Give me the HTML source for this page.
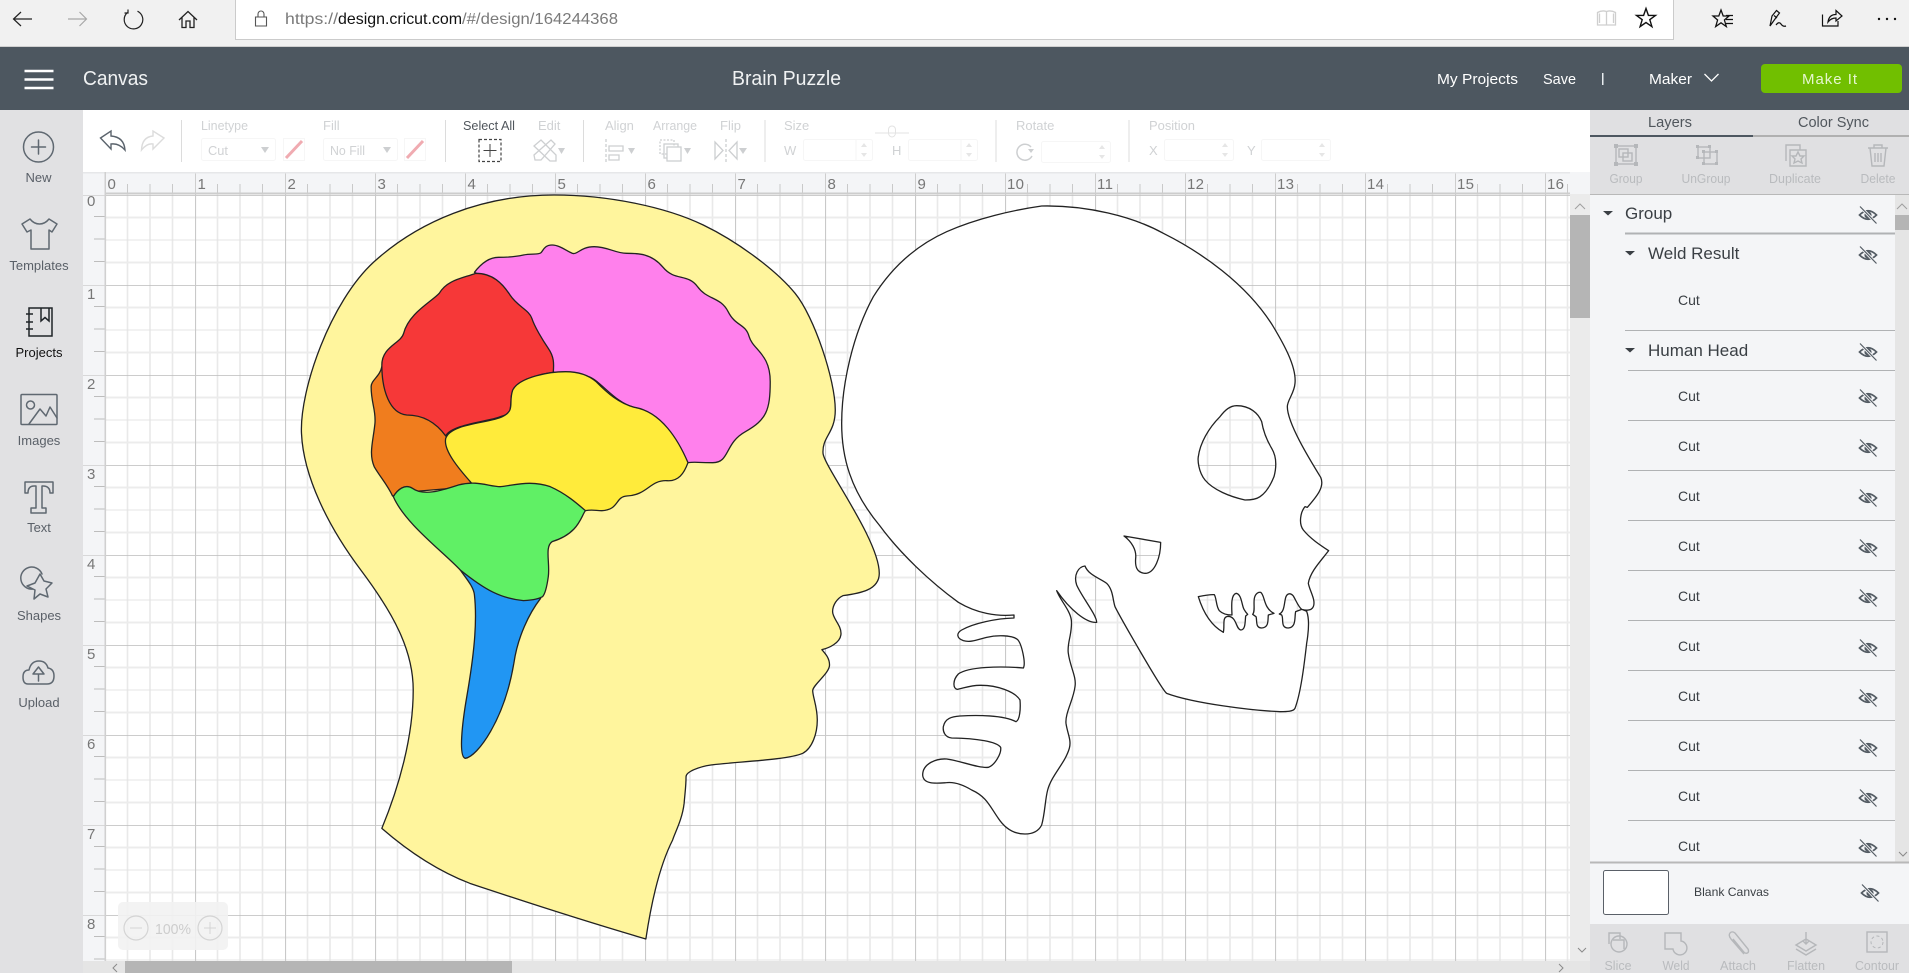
<!DOCTYPE html>
<html><head><meta charset="utf-8"><title>Brain Puzzle</title>
<style>
html,body{margin:0;padding:0;background:#fff;width:1909px;height:973px;overflow:hidden}
svg{display:block;font-family:"Liberation Sans",Arial,sans-serif}
.art path{vector-effect:non-scaling-stroke;stroke:#222;stroke-width:1.3;stroke-linejoin:round}
.side text{font-size:13px;fill:#5a6068;text-anchor:middle}
.side .ic{fill:none;stroke:#5f6871;stroke-width:1.5;stroke-linejoin:round;stroke-linecap:round}
.dis{font-size:13px;fill:#d0d2d4}
.box{fill:#fff;stroke:#f6f6f6;stroke-width:1}
.ti{fill:none;stroke:#cdcfd1;stroke-width:1.3}
.act{font-size:13px;fill:#b9bbbe;text-anchor:middle}
.ai{fill:none;stroke:#b5b7ba;stroke-width:1.4}
.cut{font-size:14px;fill:#3a3f44}
.lay{font-size:17px;fill:#3a3f44}
.rn{font-size:15px;fill:#777}
.dv{stroke:#dcdcdc;stroke-width:1}
.rw{stroke:#b0b2b4;stroke-width:1}
</style></head><body>
<svg width="1909" height="973" viewBox="0 0 1909 973" xmlns="http://www.w3.org/2000/svg">
<defs>
<pattern id="grid" patternUnits="userSpaceOnUse" x="105" y="195" width="90" height="90">
<rect width="90" height="90" fill="#fff"/>
<path d="M22.5 0V90M45 0V90M67.5 0V90" stroke="#e9e9e9" stroke-width="1.6"/>
<path d="M0 22.5H90M0 67.5H90" stroke="#ececec" stroke-width="2"/>
<path d="M0 45H90" stroke="#e4e4e4" stroke-width="1"/>
<path d="M0 0H90" stroke="#bcbcbc" stroke-width="1.4"/>
<path d="M0 0V90" stroke="#c9c9c9" stroke-width="2.2"/>
</pattern>
<pattern id="rt" patternUnits="userSpaceOnUse" x="105" y="172" width="90" height="22">
<path d="M22.5 12V22M45 12V22M67.5 12V22" stroke="#c9c9c9" stroke-width="1"/>
<path d="M0 0V22" stroke="#c4c4c4" stroke-width="1.6"/>
</pattern>
<pattern id="rl" patternUnits="userSpaceOnUse" x="83" y="195" width="22" height="90">
<path d="M11 21.5H22M11 44H22M11 66.5H22" stroke="#bdbdbd" stroke-width="1"/>
<path d="M0 0H22" stroke="#bbb" stroke-width="1"/>
</pattern>
<g id="eye">
<path d="M-8.5 0Q0-8.5 8.5 0Q0 8.5-8.5 0Z" fill="none" stroke="#545c64" stroke-width="1.7"/>
<circle r="3.6" fill="#545c64"/>
<path d="M-7.5-8L8 8" stroke="#f4f5f7" stroke-width="3"/>
<path d="M-8-8.5L8.5 8.5" stroke="#545c64" stroke-width="1.2"/>
</g>
<path id="tri" d="M0 0H10L5 4.5Z" fill="#3a3f44"/>
</defs>

<!-- browser bar -->
<rect width="1909" height="47" fill="#f1f1f1"/>
<rect x="235.500" y="-2" width="1438" height="41.500" fill="#fff" stroke="#cbcbcb"/>
<rect y="46" width="1909" height="1" fill="#d0d0d0"/>
<path d="M32 19H14M21 12l-7.500 7 7.500 7" fill="none" stroke="#222" stroke-width="1.200"/>
<path d="M68 19H86.500M79.500 12l7 7-7 7" fill="none" stroke="#a8a8a8" stroke-width="1.200"/>
<path d="M127.500 12.500A9.300 9.300 0 1 0 137.500 11.200M128 9.500V13H124.500" fill="none" stroke="#222" stroke-width="1.200"/>
<path d="M179 20L188 11.500L197 20M182 17.500V27.500H186V21H190V27.500H194V17.500" fill="none" stroke="#222" stroke-width="1.300"/>
<path d="M258 17V14a3 3 0 0 1 6 0V17M255.500 17H266.500V26H255.500Z" fill="none" stroke="#555" stroke-width="1.100"/>
<text x="285" y="24" font-size="16" fill="#7a7a7a" textLength="53" lengthAdjust="spacingAndGlyphs">https://</text>
<text x="338" y="24" font-size="16" fill="#111" textLength="124" lengthAdjust="spacingAndGlyphs">design.cricut.com</text>
<text x="462" y="24" font-size="16" fill="#7a7a7a" textLength="156" lengthAdjust="spacingAndGlyphs">/#/design/164244368</text>
<path d="M1597.500 12.500V25H1606.500V11.500Q1602 10 1597.500 12.500ZM1606.500 11.500Q1611 10 1615.500 12.500V25H1606.500M1599.500 13.500V23M1613.500 13.500V23" fill="none" stroke="#cfcfcf" stroke-width="1.300"/>
<polygon transform="translate(1646,18.500)" points="0,-10 2.400,-3.100 9.500,-3.100 3.800,1.200 5.900,8.100 0,4 -5.900,8.100 -3.800,1.200 -9.500,-3.100 -2.400,-3.100" fill="none" stroke="#111" stroke-width="1.400"/>
<polygon transform="translate(1721,19)" points="0,-9 2.200,-3 8,-3 3.400,1 5.300,7.500 0,3.800 -5.300,7.500 -3.400,1 -8,-3 -2.200,-3" fill="none" stroke="#111" stroke-width="1.300"/>
<path d="M1726 15.500H1733M1726 19.500H1733M1726 23.500H1733" stroke="#111" stroke-width="1.200"/>
<path d="M1770 26L1772 16L1776.500 10.500L1779.500 13L1775 19L1770 26ZM1774 15.500L1777 18M1776 25Q1779 21 1781 24T1786 26" fill="none" stroke="#111" stroke-width="1.200"/>
<path d="M1822.500 14.500V26H1838V21M1828 22Q1829 14.500 1836 14.500V10.500L1842 16L1836 21V18Q1831 18 1828 22Z" fill="none" stroke="#111" stroke-width="1.200"/>
<circle cx="1879" cy="19" r="1.200" fill="#111"/><circle cx="1887" cy="19" r="1.200" fill="#111"/><circle cx="1895" cy="19" r="1.200" fill="#111"/>

<!-- app header -->
<rect y="47" width="1909" height="63" fill="#4d5760"/>
<path d="M24.500 71H53.500M24.500 79.500H53.500M24.500 88H53.500" stroke="#fff" stroke-width="2.400"/>
<text x="83" y="85" font-size="20" fill="#f0f2f3" textLength="65" lengthAdjust="spacingAndGlyphs">Canvas</text>
<text x="732" y="85" font-size="20" fill="#f0f2f3" textLength="109" lengthAdjust="spacingAndGlyphs">Brain Puzzle</text>
<text x="1437" y="84" font-size="15" fill="#fff" textLength="81" lengthAdjust="spacingAndGlyphs">My Projects</text>
<text x="1543" y="84" font-size="15" fill="#fff" textLength="33" lengthAdjust="spacingAndGlyphs">Save</text>
<rect x="1602" y="73" width="1.500" height="12" fill="#e8ecef"/>
<text x="1649" y="84" font-size="15" fill="#fff" textLength="43" lengthAdjust="spacingAndGlyphs">Maker</text>
<path d="M1704.500 74L1711.500 81L1718.500 74" fill="none" stroke="#fff" stroke-width="1.300"/>
<rect x="1761" y="64" width="141" height="29" rx="4" fill="#71bf00"/>
<text x="1802" y="84" font-size="15" fill="#e6f6cf" textLength="55">Make It</text>

<!-- sidebar -->
<rect y="110" width="83" height="863" fill="#e1e1e3"/>
<g class="side">
<circle class="ic" cx="38.500" cy="147" r="15"/><path class="ic" d="M38.500 140V154M31.500 147H45.500"/>
<text x="38.500" y="182">New</text>
<path class="ic" d="M30 219L22 224L27 232L31 230V249H49V230L52 232L57 224L49 219Q45 224 39.500 224Q34 224 30 219Z"/>
<text x="39" y="270">Templates</text>
<path d="M29 308H52V336H29ZM26 314H33M26 322H33M26 329H33M41 308V321L45 317.500L49 321V308" fill="none" stroke="#1f2428" stroke-width="1.500"/>
<text x="39" y="357" style="fill:#111">Projects</text>
<rect class="ic" x="21" y="394.500" width="36" height="30" rx="1"/><circle class="ic" cx="30.500" cy="405" r="4"/><path class="ic" d="M29 424L40 409L46 416L50 407L57 418"/>
<text x="39" y="445">Images</text>
<path class="ic" d="M25 482H53V493L50 493Q50 486 43 486H42V508H46V513H31V508H36V486H34Q28 486 28 493L25 493Z"/>
<text x="39" y="532">Text</text>
<path class="ic" d="M42 574A11 11 0 1 0 33 589M40 574L44 581L52 583L46 589L48 597L40 594L34 599L35 590L27 586L35 583Z"/>
<text x="39" y="620">Shapes</text>
<path class="ic" d="M31 684H28Q23 684 23 677Q23 670 29 670Q31 661 39 661Q46 661 48 668Q54 669 54 676Q54 684 47 684H31ZM38.500 681V674H33L38.500 667L44 674H39"/>
<text x="39" y="707">Upload</text>
</g>

<!-- toolbar -->
<rect x="83" y="110" width="1507" height="62" fill="#fff"/>
<path d="M100.500 138L111 131V136Q124 137 125 150Q119 143 111 144V149Z" fill="none" stroke="#5a636c" stroke-width="1.400"/>
<path d="M164 138L153 131V136Q142 137 141.500 150Q147 143 153 144V149Z" fill="none" stroke="#dcdcdc" stroke-width="1.400"/>
<path class="dv" d="M181.500 120V162M445.500 120V162M583.500 120V162M765 120V162M996 120V162M1129 120V162"/>
<text class="dis" x="201" y="130" textLength="47" lengthAdjust="spacingAndGlyphs">Linetype</text>
<rect class="box" x="201.500" y="138.500" width="74" height="22" rx="2"/>
<text class="dis" x="208" y="155" textLength="20" lengthAdjust="spacingAndGlyphs">Cut</text>
<path d="M261 147H269L265 153Z" fill="#cdcfd1"/>
<rect class="box" x="283.500" y="138.500" width="21" height="22"/>
<path d="M286 158L302 141" stroke="#f0abb1" stroke-width="3"/>
<text class="dis" x="323" y="130">Fill</text>
<rect class="box" x="323.500" y="138.500" width="74" height="22" rx="2"/>
<text class="dis" x="330" y="155" textLength="35" lengthAdjust="spacingAndGlyphs">No Fill</text>
<path d="M383 147H391L387 153Z" fill="#cdcfd1"/>
<rect class="box" x="404.500" y="138.500" width="21" height="22"/>
<path d="M407 158L423 141" stroke="#f0abb1" stroke-width="3"/>
<text x="463" y="130" font-size="13" fill="#50565c" textLength="52" lengthAdjust="spacingAndGlyphs">Select All</text>
<rect x="479" y="139.500" width="22" height="22" fill="none" stroke="#444" stroke-width="1.200" stroke-dasharray="3 2"/>
<path d="M490 144V157M483.500 150.500H496.500" stroke="#444" stroke-width="1"/>
<text class="dis" x="538" y="130">Edit</text>
<path class="ti" d="M534 146L541 140L556 155L556 161L550 161ZM534 155L551 140L555 144L541 160L535 160Z"/>
<path d="M558 148H565L561.500 154Z" fill="#cdcfd1"/>
<text class="dis" x="605" y="130">Align</text>
<path class="ti" d="M606 139V162" stroke-dasharray="3 2"/><path class="ti" d="M609 146H623V151H609ZM609 155H619V160H609Z"/>
<path d="M628 148H635L631.500 154Z" fill="#cdcfd1"/>
<text class="dis" x="653" y="130" textLength="44" lengthAdjust="spacingAndGlyphs">Arrange</text>
<rect class="ti" x="660" y="140" width="14" height="14" stroke-dasharray="2 1.500"/><rect class="ti" x="664" y="144" width="14" height="14"/><rect x="667" y="147" width="14" height="14" fill="#fff" stroke="#cdcfd1" stroke-width="1.300"/>
<path d="M684 148H691L687.500 154Z" fill="#cdcfd1"/>
<text class="dis" x="720" y="130">Flip</text>
<path class="ti" d="M715 142V159L723 150.500ZM737 142V159L729 150.500Z"/><path class="ti" d="M726 139V162" stroke-dasharray="3 2"/>
<path d="M739 148H747L743 154Z" fill="#cdcfd1"/>
<text class="dis" x="784" y="130">Size</text>
<text class="dis" x="784" y="155">W</text>
<rect class="box" x="803.500" y="139.500" width="69" height="21" rx="2"/>
<path class="box" d="M856 139.500V160.500"/>
<path d="M864 143L867 147H861ZM864 157L867 153H861Z" fill="#e6e6e6"/>
<text class="dis" x="892" y="155">H</text>
<rect class="box" x="908.500" y="139.500" width="69" height="21" rx="2"/>
<path class="box" d="M961 139.500V160.500"/>
<path d="M969 143L972 147H966ZM969 157L972 153H966Z" fill="#e6e6e6"/>
<path d="M875 133H909M892 126a3.500 3.500 0 0 0-3.500 3.500V133a3.500 4 0 0 0 7 0V129.500A3.500 3.500 0 0 0 892 126Z" fill="none" stroke="#e3e3e3"/>
<text class="dis" x="1016" y="130">Rotate</text>
<path d="M1031 147A8 8 0 1 0 1032 156" fill="none" stroke="#cdcfd1" stroke-width="1.500"/><path d="M1028 149H1034L1031 153Z" fill="#cdcfd1"/>
<rect class="box" x="1041.500" y="141.500" width="69" height="21" rx="2"/>
<path d="M1102 145L1105 149H1099ZM1102 159L1105 155H1099Z" fill="#e6e6e6"/>
<text class="dis" x="1149" y="130" textLength="46" lengthAdjust="spacingAndGlyphs">Position</text>
<text class="dis" x="1149" y="155">X</text>
<rect class="box" x="1164.500" y="139.500" width="69" height="21" rx="2"/>
<path d="M1225 143L1228 147H1222ZM1225 157L1228 153H1222Z" fill="#e6e6e6"/>
<text class="dis" x="1247" y="155">Y</text>
<rect class="box" x="1261.500" y="139.500" width="69" height="21" rx="2"/>
<path d="M1322 143L1325 147H1319ZM1322 157L1325 153H1319Z" fill="#e6e6e6"/>

<!-- rulers & canvas -->
<rect x="83" y="172" width="1487" height="22" fill="#f4f5f7"/>
<rect x="105" y="172" width="1465" height="22" fill="url(#rt)"/>
<rect x="83" y="172" width="1487" height="1.500" fill="#e6e7e9"/>
<rect x="83" y="194" width="22" height="767" fill="#f4f5f7"/>
<rect x="83" y="194" width="22" height="767" fill="url(#rl)"/>
<rect x="105" y="194" width="1465" height="767" fill="url(#grid)"/>
<rect x="105" y="192.500" width="1465" height="2" fill="#cdcdcd"/>
<rect x="104.500" y="172" width="1.500" height="789" fill="#d0d0d0"/>
<g class="rn">
<text x="107.500" y="189">0</text><text x="197.500" y="189">1</text><text x="287.500" y="189">2</text><text x="377.500" y="189">3</text><text x="467.500" y="189">4</text><text x="557.500" y="189">5</text><text x="647.500" y="189">6</text><text x="737.500" y="189">7</text><text x="827.500" y="189">8</text><text x="917.500" y="189">9</text>
<text x="1007" y="189" textLength="17">10</text><text x="1097" y="189" textLength="16">11</text><text x="1187" y="189" textLength="17">12</text><text x="1277" y="189" textLength="17">13</text><text x="1367" y="189" textLength="17">14</text><text x="1457" y="189" textLength="17">15</text><text x="1547" y="189" textLength="17">16</text>
<text x="87" y="206">0</text><text x="87" y="299">1</text><text x="87" y="389">2</text><text x="87" y="479">3</text><text x="87" y="569">4</text><text x="87" y="659">5</text><text x="87" y="749">6</text><text x="87" y="839">7</text><text x="87" y="929">8</text>
</g>

<!-- head & brain -->
<g class="art" transform="translate(290,190) scale(.38265,.33333)">
<path fill="#fff59d" d="M240 1915C285 1790 322 1640 322 1500C322 1380 270 1270 185 1140S35 860 30 730S105 335 220 215S500 15 690 15C830 15 980 50 1080 105C1170 155 1270 240 1320 310C1370 380 1425 570 1425 660C1425 730 1390 740 1393 790C1396 830 1540 1050 1540 1150C1540 1200 1490 1210 1445 1217C1430 1225 1418 1245 1418 1265C1418 1285 1440 1305 1440 1330C1440 1360 1405 1375 1390 1379C1400 1392 1410 1405 1410 1425C1410 1450 1366 1485 1366 1502C1366 1520 1378 1550 1378 1590C1378 1630 1365 1675 1340 1690C1300 1710 1170 1715 1100 1725C1070 1730 1035 1745 1035 1760C1035 1790 1032 1810 1030 1840C1025 1890 1005 1930 1000 1950C960 2040 940 2170 930 2247C790 2200 600 2130 470 2080C380 2040 300 1975 240 1915Z"/>
<path fill="#ff80ec" d="M482 247C500 220 520 202 545 202S590 200 610 195S650 195 656 188S665 165 685 165S725 185 738 190S760 170 795 170S850 190 880 190S945 190 975 232S1040 250 1065 290S1125 320 1145 365S1190 400 1200 440S1255 490 1255 575S1245 690 1190 725S1150 818 1105 818S1060 815 1040 818C1010 750 970 670 900 652C850 640 810 570 780 560C750 545 720 545 688 547L640 480L520 270Z"/>
<path fill="#f07d1e" d="M240 530C235 560 212 570 212 590C212 640 225 660 222 700C218 750 205 790 220 830C235 860 255 885 268 918L320 905L475 890L460 830L430 730L400 700L300 640L260 600Z"/>
<path fill="#f63838" d="M485 250C530 250 555 280 575 315S625 360 632 385S660 450 675 475S690 520 688 547C640 555 580 575 578 625S575 670 545 682S420 705 407 738C380 695 345 675 305 675C260 670 240 600 240 525C240 470 290 460 297 430C310 370 370 335 390 310C410 270 450 265 485 250Z"/>
<path fill="#ffeb3b" d="M407 745C420 700 520 700 555 680C590 660 570 640 582 600C600 560 680 545 720 545C760 545 785 560 800 575C830 610 860 640 900 652C970 665 1015 750 1040 818C1030 850 1015 875 985 872C940 870 935 915 880 918C850 920 860 960 815 962C800 962 790 958 772 962L600 920L500 900L475 880C440 835 400 780 407 745Z"/>
<path fill="#2196f3" d="M445 1140C460 1165 480 1190 482 1215C490 1300 480 1400 462 1520C450 1600 440 1700 458 1705C490 1700 560 1590 585 1420C595 1340 625 1270 655 1225L560 1150Z"/>
<path fill="#60f065" d="M270 920C280 900 300 880 320 895C350 920 400 900 440 885C490 870 520 890 550 890C590 885 630 870 680 890C720 910 750 940 772 962C760 980 755 1030 685 1055C665 1070 680 1120 675 1160C672 1185 668 1210 660 1220C650 1226 640 1230 610 1232C550 1225 510 1200 445 1140C400 1085 300 1000 270 920Z"/>
</g>

<!-- skull -->
<g class="art" transform="translate(880,500) scale(.33333)">
<path fill="#fff" fill-rule="evenodd" d="M485-882C620-885 760-850 850-800C960-745 1100-650 1180-520C1210-470 1250-400 1245-350C1243-320 1222-300 1222-280C1222-230 1290-120 1322-68C1335-40 1310-10 1282 22L1275 20C1262 35 1255 70 1270 90C1290 115 1320 135 1346 152C1325 180 1290 215 1285 250C1290 275 1308 300 1300 320C1295 332 1280 332 1265 328L1280 334C1290 360 1285 400 1280 430C1272 500 1262 580 1245 625C1240 635 1220 635 1200 635C1120 632 940 610 860 580C845 570 720 350 705 320C698 300 700 270 680 250C660 235 625 225 615 198C595 200 580 225 590 255C605 290 650 345 650 367C620 370 570 330 530 272C540 300 570 330 574 360C578 400 560 430 565 460C570 500 590 530 585 560C580 600 555 640 558 670C562 700 575 720 568 745C555 790 515 825 503 870C495 900 495 940 485 975C475 995 455 1002 435 1002C400 1002 375 985 355 955C330 920 320 890 275 870C250 855 225 845 200 848C170 850 130 855 128 825C128 790 170 775 200 777C240 782 295 805 325 802C345 795 365 760 362 742C350 725 290 715 215 714C195 712 188 695 190 680C195 655 215 650 240 648C290 645 370 645 408 665C420 660 422 625 420 600C405 575 350 555 300 556C270 556 250 565 232 568C218 565 218 540 235 522C265 500 360 498 430 504C438 490 425 430 412 418C395 405 350 405 320 412C290 420 270 428 250 422C230 415 228 400 245 390C280 370 350 355 402 354L402 345C350 350 290 340 235 307C150 245 60 160 0 78C-90-30-115-130-115-230C-115-350-80-500-20-610C30-690 100-760 200-805C290-845 400-870 485-882Z
M1070-283C1110-283 1135-260 1145-235C1150-205 1160-180 1175-155C1190-130 1190-100 1182-70C1170-40 1155-20 1140-10C1130-3 1110 0 1095 0C1050-10 1000-30 975-60C955-85 953-120 955-130C960-170 985-215 1020-250C1035-270 1050-283 1070-283Z
M732 108L842 127C842 170 825 220 795 220C770 218 765 200 767 175C770 150 755 125 732 108Z
M955 290C970 287 990 283 1003 284C1010 295 1008 320 1018 332C1028 342 1045 345 1056 345C1055 320 1052 285 1068 280C1085 282 1085 315 1092 328C1096 335 1100 340 1103 343L1097 348C1095 365 1097 390 1082 390C1068 388 1070 350 1045 349C1025 350 1035 375 1030 397C1000 380 972 345 955 290Z
M1118 343C1126 335 1120 310 1123 295C1126 280 1135 276 1142 277C1155 285 1150 325 1182 340L1165 345C1163 360 1168 382 1145 384C1125 384 1132 360 1128 350Z
M1198 342C1215 335 1212 305 1218 290C1222 280 1232 278 1240 288C1250 305 1255 320 1265 328L1247 335C1243 350 1250 382 1225 384C1200 384 1212 355 1205 345Z"/>
</g>

<!-- zoom control -->
<rect x="118" y="902" width="110" height="48" rx="5" fill="#f2f2f2" fill-opacity=".9"/>
<circle cx="136" cy="928" r="12" fill="none" stroke="#d4d4d4" stroke-width="1.200"/><path d="M130 928H142" stroke="#d4d4d4"/>
<text x="155" y="934" font-size="15" fill="#cdcdcd" textLength="36" lengthAdjust="spacingAndGlyphs">100%</text>
<circle cx="210" cy="928" r="12" fill="none" stroke="#d4d4d4" stroke-width="1.200"/><path d="M204 928H216M210 922V934" stroke="#d4d4d4"/>

<!-- canvas scrollbars -->
<rect x="83" y="961" width="1507" height="12" fill="#e5e5e5"/>
<rect x="125" y="961" width="387" height="12" fill="#b5b5b5"/>
<path d="M117 964L113 968L117 972" fill="none" stroke="#8a8a8a"/>
<path d="M1559 964L1563 968L1559 972" fill="none" stroke="#8a8a8a"/>
<rect x="1570" y="172" width="20" height="789" fill="#ebebeb"/>
<rect x="1570" y="172" width="20" height="22" fill="#f4f5f7"/>
<rect x="1570" y="215" width="20" height="103" fill="#b5b5b5"/>
<path d="M1575 209L1580 204L1585 209" fill="none" stroke="#a0a0a0"/>
<path d="M1578 948L1582 952L1586 948" fill="none" stroke="#8a8a8a"/>

<!-- right panel -->
<rect x="1590" y="110" width="319" height="84" fill="#e0e0e2"/>
<text x="1648" y="127" font-size="15" fill="#50565c" textLength="44" lengthAdjust="spacingAndGlyphs">Layers</text>
<text x="1798" y="127" font-size="15" fill="#50565c" textLength="71" lengthAdjust="spacingAndGlyphs">Color Sync</text>
<rect x="1590" y="135" width="163" height="2" fill="#4d5760"/>
<rect x="1753" y="135" width="156" height="2" fill="#b0b0b0"/>
<!-- action icons -->
<rect class="ai" x="1616" y="146" width="20" height="18"/><rect class="ai" x="1619" y="149" width="9" height="8"/><rect class="ai" x="1623" y="153" width="9" height="8"/>
<path d="M1614 144h4v4h-4zM1634 144h4v4h-4zM1614 162h4v4h-4zM1634 162h4v4h-4z" fill="#b5b7ba"/>
<text class="act" x="1626" y="183" textLength="33" lengthAdjust="spacingAndGlyphs">Group</text>
<rect class="ai" x="1698" y="147" width="12" height="11"/><rect class="ai" x="1704" y="152" width="13" height="12"/>
<path d="M1696 145h3v3h-3zM1708 145h3v3h-3zM1696 156h3v3h-3zM1702 150h3v3h-3zM1715 150h3v3h-3zM1702 162h3v3h-3zM1715 162h3v3h-3z" fill="#b5b7ba"/>
<text class="act" x="1706" y="183" textLength="49" lengthAdjust="spacingAndGlyphs">UnGroup</text>
<path class="ai" d="M1786 161V145H1800V150M1790 150H1806V166H1790ZM1798 152L1800 156H1804L1801 159L1802 163L1798 161L1794 163L1795 159L1792 156H1796Z"/>
<text class="act" x="1795" y="183" textLength="52" lengthAdjust="spacingAndGlyphs">Duplicate</text>
<path class="ai" d="M1868 148H1888M1874 148V145H1882V148M1870 148L1872 166H1884L1886 148M1875 153V162M1878 153V162M1881 153V162"/>
<text class="act" x="1878" y="183" textLength="35" lengthAdjust="spacingAndGlyphs">Delete</text>
<rect x="1590" y="194" width="319" height="1.500" fill="#b8b8b8"/>

<!-- list -->
<rect x="1590" y="195" width="305" height="668" fill="#f4f5f7"/>
<rect x="1895" y="195" width="14" height="668" fill="#e5e5e5"/>
<rect x="1895" y="215" width="14" height="15" fill="#b5b5b5"/>
<path d="M1897 209L1902 204L1907 209" fill="none" stroke="#a0a0a0"/>
<path d="M1899 852L1903 856L1907 852" fill="none" stroke="#8a8a8a"/>
<use href="#tri" x="1603" y="211"/>
<text class="lay" x="1625" y="219">Group</text>
<use href="#tri" x="1625" y="251"/>
<text class="lay" x="1648" y="259">Weld Result</text>
<use href="#tri" x="1625" y="348"/>
<text class="lay" x="1648" y="356">Human Head</text>
<rect x="1625" y="232.500" width="270" height="2" fill="#b0b2b4"/>
<path class="rw" d="M1625 330.500H1895M1628 370.500H1895M1628 420.500H1895M1628 470.500H1895M1628 520.500H1895M1628 570.500H1895M1628 620.500H1895M1628 670.500H1895M1628 720.500H1895M1628 770.500H1895M1628 820.500H1895"/>
<text class="cut" x="1678" y="305">Cut</text>
<text class="cut" x="1678" y="401">Cut</text><text class="cut" x="1678" y="451">Cut</text><text class="cut" x="1678" y="501">Cut</text><text class="cut" x="1678" y="551">Cut</text><text class="cut" x="1678" y="601">Cut</text><text class="cut" x="1678" y="651">Cut</text><text class="cut" x="1678" y="701">Cut</text><text class="cut" x="1678" y="751">Cut</text><text class="cut" x="1678" y="801">Cut</text><text class="cut" x="1678" y="851">Cut</text>
<use href="#eye" x="1868" y="215"/><use href="#eye" x="1868" y="255"/><use href="#eye" x="1868" y="352"/><use href="#eye" x="1868" y="398"/><use href="#eye" x="1868" y="448"/><use href="#eye" x="1868" y="498"/><use href="#eye" x="1868" y="548"/><use href="#eye" x="1868" y="598"/><use href="#eye" x="1868" y="648"/><use href="#eye" x="1868" y="698"/><use href="#eye" x="1868" y="748"/><use href="#eye" x="1868" y="798"/><use href="#eye" x="1868" y="848"/>

<!-- blank canvas -->
<rect x="1590" y="862" width="319" height="62" fill="#f4f5f7"/>
<rect x="1590" y="861.500" width="319" height="2" fill="#b8b8b8"/>
<rect x="1603.500" y="870.500" width="65" height="44" rx="2" fill="#fff" stroke="#5a6068"/>
<text x="1694" y="896" font-size="12" fill="#3a3f44" textLength="75" lengthAdjust="spacingAndGlyphs">Blank Canvas</text>
<use href="#eye" x="1870" y="893"/>

<!-- bottom actions -->
<rect x="1590" y="924" width="319" height="49" fill="#e0e0e2"/>
<path class="ai" d="M1609 944V933H1620V939"/><circle class="ai" cx="1619" cy="944" r="8"/><path class="ai" d="M1613 940H1624V949"/>
<text class="act" x="1618" y="970" textLength="27" lengthAdjust="spacingAndGlyphs">Slice</text>
<path class="ai" d="M1665 933H1681V941A7 7 0 1 1 1673 949H1665Z"/>
<text class="act" x="1676" y="970" textLength="27" lengthAdjust="spacingAndGlyphs">Weld</text>
<path class="ai" d="M1744 954L1731 939C1727 934 1731 930 1735 933L1748 949C1750 953 1746 955 1743 951L1733 939"/>
<text class="act" x="1738" y="970" textLength="36" lengthAdjust="spacingAndGlyphs">Attach</text>
<path class="ai" d="M1796 945L1806 939L1816 945L1806 951ZM1796 949L1806 955L1816 949M1806 932V944M1803 941L1806 944L1809 941"/>
<text class="act" x="1806" y="970" textLength="38" lengthAdjust="spacingAndGlyphs">Flatten</text>
<rect class="ai" x="1867" y="932" width="20" height="20"/><circle cx="1877" cy="942" r="6" fill="none" stroke="#b5b7ba" stroke-dasharray="3 2.500"/>
<text class="act" x="1877" y="970" textLength="44" lengthAdjust="spacingAndGlyphs">Contour</text>
</svg>
</body></html>
